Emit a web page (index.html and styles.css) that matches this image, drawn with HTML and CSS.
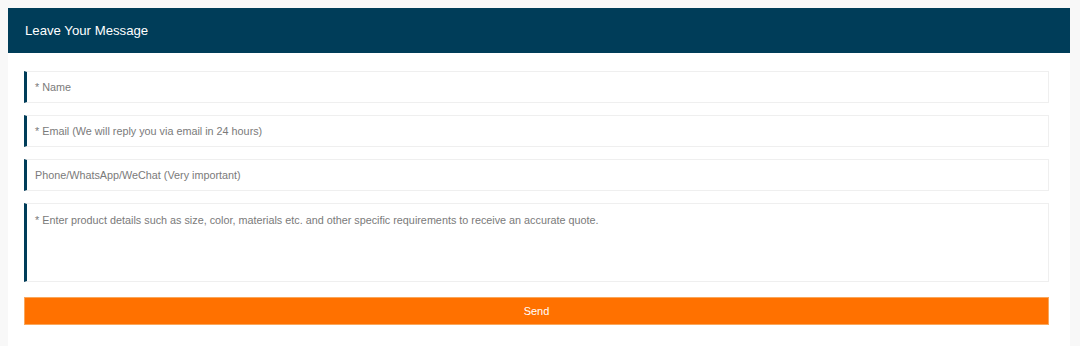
FILE: index.html
```html
<!DOCTYPE html>
<html>
<head>
<meta charset="utf-8">
<link rel="stylesheet" href="styles.css">
</head>
<body>
<div class="card">
  <div class="card-head">Leave Your Message</div>
  <form class="card-body">
    <div class="field"><span class="ph">* Name</span></div>
    <div class="field"><span class="ph">* Email (We will reply you via email in 24 hours)</span></div>
    <div class="field"><span class="ph">Phone/WhatsApp/WeChat (Very important)</span></div>
    <div class="field area"><span class="ph">* Enter product details such as size, color, materials etc. and other specific requirements to receive an accurate quote.</span></div>
    <div class="send">Send</div>
  </form>
</div>
</body>
</html>
```
FILE: styles.css
```css
html, body {
  margin: 0;
  padding: 0;
  background: #f8f8f8;
  height: 100%;
  font-family: "Liberation Sans", Arial, sans-serif;
}
body {
  padding: 8px 10px 0 8px;
  box-sizing: border-box;
}
.card {
  width: 1062px;
  background: #ffffff;
  height: 338px;
  box-sizing: border-box;
}
.card-head {
  height: 45px;
  background: #003d59;
  color: #ffffff;
  font-size: 13.2px;
  line-height: 46px;
  padding-left: 17px;
}
.card-body {
  display: flex;
  flex-direction: column;
  gap: 12px;
  padding: 18px 21px 0 16px;
  margin: 0;
}
.field {
  height: 32px;
  box-sizing: border-box;
  border: 1px solid #efefef;
  border-left: 3px solid #003d59;
  padding: 0 10px 0 8px;
  display: flex;
  align-items: center;
  background: #fff;
}
.ph {
  color: #7a7a7a;
  font-size: 10.8px;
}
.area {
  height: 79px;
  align-items: flex-start;
  padding-top: 10px;
}
.send {
  margin-top: 3px;
  height: 28px;
  background: #ff7100;
  border: 1px solid #f9a75c;
  box-sizing: border-box;
  color: #fff;
  font-size: 11px;
  display: flex;
  align-items: center;
  justify-content: center;
}
```
